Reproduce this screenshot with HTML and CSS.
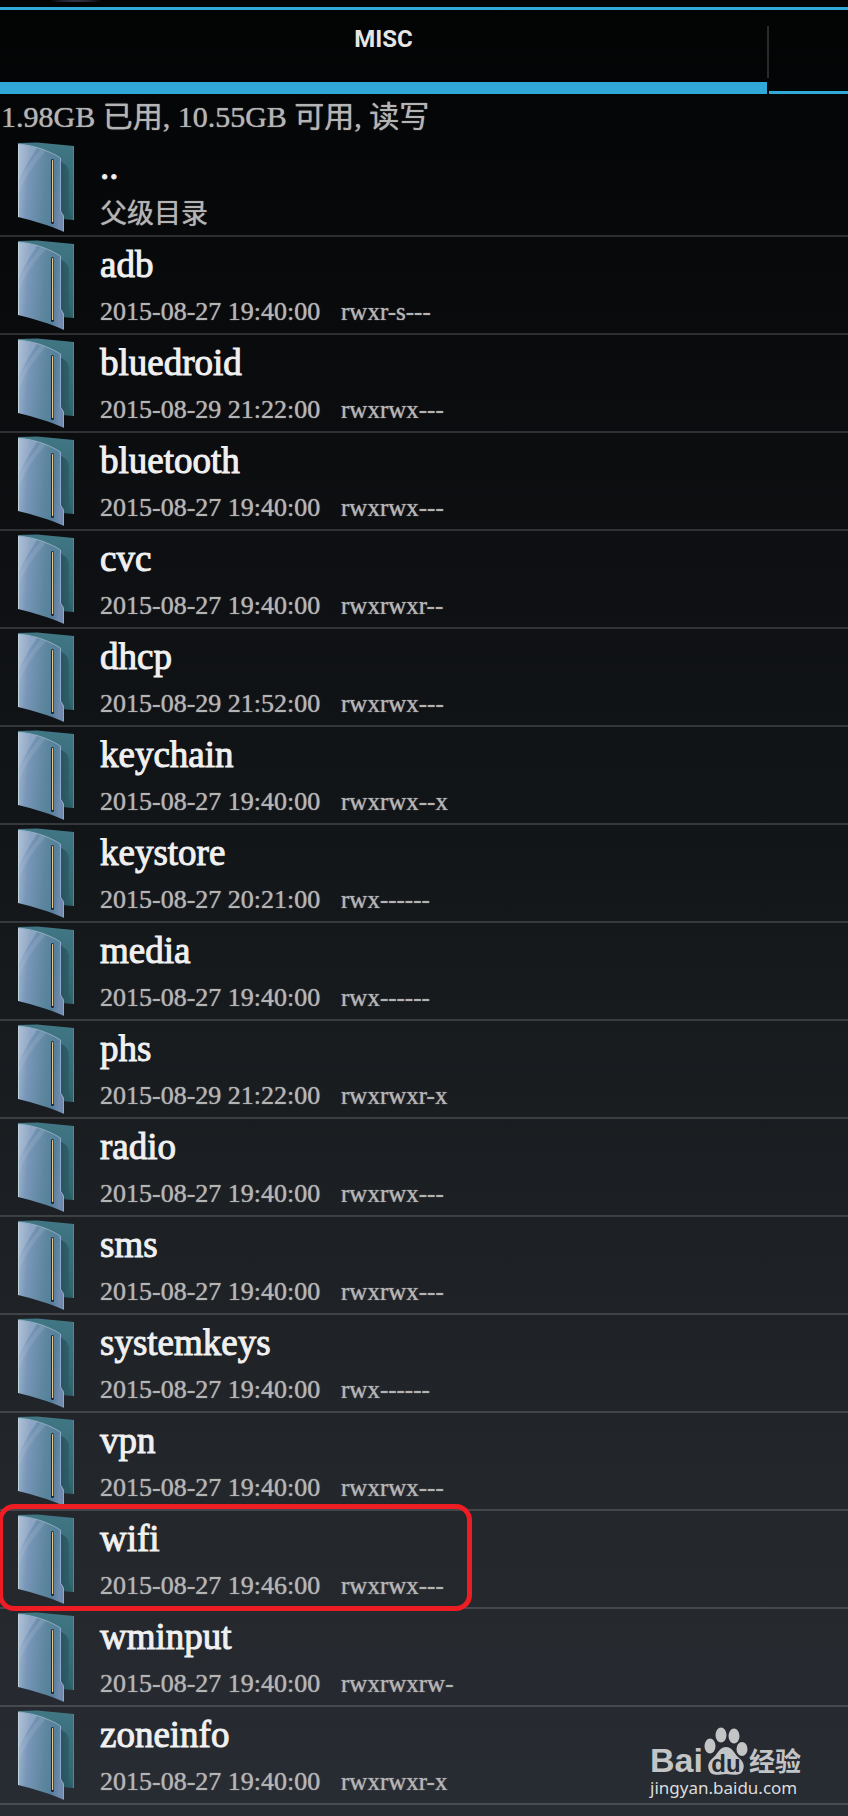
FILE: index.html
```html
<!DOCTYPE html>
<html lang="zh-CN">
<head>
<meta charset="utf-8">
<meta name="viewport" content="width=device-width, initial-scale=1">
<title>MISC</title>
<link rel="stylesheet" href="styles.css">
</head>
<body>
<svg class="defs" aria-hidden="true">
  <defs>
    <linearGradient id="back" x1="0" y1="0" x2="0" y2="1"><stop offset="0" stop-color="#417785"/><stop offset="1" stop-color="#2f646e"/></linearGradient>
    <linearGradient id="front" x1="0" y1="0" x2="1" y2="0.15"><stop offset="0" stop-color="#a9bdd2"/><stop offset="0.28" stop-color="#7896b9"/><stop offset="0.65" stop-color="#5d869e"/><stop offset="0.85" stop-color="#547f9b"/><stop offset="1" stop-color="#7089ad"/></linearGradient>
    <linearGradient id="fold" x1="0" y1="0" x2="1" y2="0"><stop offset="0" stop-color="#27525c"/><stop offset="1" stop-color="#2b5a64" stop-opacity=".6"/></linearGradient>
    <symbol id="folder" viewBox="0 0 60 92">
      <path d="M1 1 L20 .5 L57 4 L57 78 L45 77 L40 60Z" fill="url(#back)"/>
      <path d="M42 18 L50 24 L52 29 L52 68 L55 77 L46 77 L42 70Z" fill="url(#fold)"/>
      <path d="M56.500 4 V78" stroke="#4f8a98"/>
      <path d="M1 2 C14 3 29 7 43.500 16 L43.500 69 L47 74 L47 90 C32 83 17 79 1 75Z" fill="url(#front)"/>
      <path d="M1.500 2.500 L20 5.500 C14 16 6 26 1.500 42Z" fill="#c5cde0" opacity=".3"/>
      <path d="M24 7 L29 9 C20 19 9 32 2 50 L2 42 C8 27 16 17 24 7Z" fill="#c5cde0" opacity=".16"/>
      <path d="M1.500 2 V75" stroke="#bfd3df"/>
      <path d="M43.500 16 L43.500 69 L46.500 74 V89" fill="none" stroke="#8fa9cb"/>
      <path d="M1 2 C14 3 29 7 43.500 16" fill="none" stroke="#9db8cb" stroke-width=".8"/>
      <rect x="34" y="17" width="3" height="65" rx="1.500" fill="#20282c"/>
      <rect x="35" y="18" width="1.200" height="62" rx=".6" fill="#f1c98a"/>
    </symbol>
  </defs>
</svg>
<div class="screen">
  <div class="topstrip"><span class="glow"></span></div>
  <nav class="tabs" role="tablist">
    <button class="tab tab-active" role="tab" aria-selected="true">MISC</button>
    <span class="tab-divider"></span>
    <button class="tab tab-next" role="tab" aria-selected="false" aria-label="下一个"></button>
  </nav>
  <p class="status">1.98GB 已用, 10.55GB 可用, 读写</p>
  <ul class="files">
    <li><button class="row"><svg class="icon"><use href="#folder"/></svg><span class="info"><span class="name">..</span><span class="meta"><span class="parent">父级目录</span></span></span></button></li>
    <li><button class="row"><svg class="icon"><use href="#folder"/></svg><span class="info"><span class="name">adb</span><span class="meta"><span class="date">2015-08-27 19:40:00</span><span class="perm">rwxr-s---</span></span></span></button></li>
    <li><button class="row"><svg class="icon"><use href="#folder"/></svg><span class="info"><span class="name">bluedroid</span><span class="meta"><span class="date">2015-08-29 21:22:00</span><span class="perm">rwxrwx---</span></span></span></button></li>
    <li><button class="row"><svg class="icon"><use href="#folder"/></svg><span class="info"><span class="name">bluetooth</span><span class="meta"><span class="date">2015-08-27 19:40:00</span><span class="perm">rwxrwx---</span></span></span></button></li>
    <li><button class="row"><svg class="icon"><use href="#folder"/></svg><span class="info"><span class="name">cvc</span><span class="meta"><span class="date">2015-08-27 19:40:00</span><span class="perm">rwxrwxr--</span></span></span></button></li>
    <li><button class="row"><svg class="icon"><use href="#folder"/></svg><span class="info"><span class="name">dhcp</span><span class="meta"><span class="date">2015-08-29 21:52:00</span><span class="perm">rwxrwx---</span></span></span></button></li>
    <li><button class="row"><svg class="icon"><use href="#folder"/></svg><span class="info"><span class="name">keychain</span><span class="meta"><span class="date">2015-08-27 19:40:00</span><span class="perm">rwxrwx--x</span></span></span></button></li>
    <li><button class="row"><svg class="icon"><use href="#folder"/></svg><span class="info"><span class="name">keystore</span><span class="meta"><span class="date">2015-08-27 20:21:00</span><span class="perm">rwx------</span></span></span></button></li>
    <li><button class="row"><svg class="icon"><use href="#folder"/></svg><span class="info"><span class="name">media</span><span class="meta"><span class="date">2015-08-27 19:40:00</span><span class="perm">rwx------</span></span></span></button></li>
    <li><button class="row"><svg class="icon"><use href="#folder"/></svg><span class="info"><span class="name">phs</span><span class="meta"><span class="date">2015-08-29 21:22:00</span><span class="perm">rwxrwxr-x</span></span></span></button></li>
    <li><button class="row"><svg class="icon"><use href="#folder"/></svg><span class="info"><span class="name">radio</span><span class="meta"><span class="date">2015-08-27 19:40:00</span><span class="perm">rwxrwx---</span></span></span></button></li>
    <li><button class="row"><svg class="icon"><use href="#folder"/></svg><span class="info"><span class="name">sms</span><span class="meta"><span class="date">2015-08-27 19:40:00</span><span class="perm">rwxrwx---</span></span></span></button></li>
    <li><button class="row"><svg class="icon"><use href="#folder"/></svg><span class="info"><span class="name">systemkeys</span><span class="meta"><span class="date">2015-08-27 19:40:00</span><span class="perm">rwx------</span></span></span></button></li>
    <li><button class="row"><svg class="icon"><use href="#folder"/></svg><span class="info"><span class="name">vpn</span><span class="meta"><span class="date">2015-08-27 19:40:00</span><span class="perm">rwxrwx---</span></span></span></button></li>
    <li class="marked"><button class="row"><svg class="icon"><use href="#folder"/></svg><span class="info"><span class="name">wifi</span><span class="meta"><span class="date">2015-08-27 19:46:00</span><span class="perm">rwxrwx---</span></span></span></button></li>
    <li><button class="row"><svg class="icon"><use href="#folder"/></svg><span class="info"><span class="name">wminput</span><span class="meta"><span class="date">2015-08-27 19:40:00</span><span class="perm">rwxrwxrw-</span></span></span></button></li>
    <li><button class="row"><svg class="icon"><use href="#folder"/></svg><span class="info"><span class="name">zoneinfo</span><span class="meta"><span class="date">2015-08-27 19:40:00</span><span class="perm">rwxrwxr-x</span></span></span></button></li>
  </ul>
  <div class="watermark">
    <div class="brand">
      <span class="bai">Bai</span>
      <span class="paw">
        <svg class="paw-shape" viewBox="0 0 46 50" aria-hidden="true">
          <g fill="#c3c4c5">
            <ellipse cx="7" cy="19" rx="5.500" ry="7.500"/>
            <ellipse cx="18" cy="8" rx="5.500" ry="7.500"/>
            <ellipse cx="31" cy="9" rx="5.500" ry="7.500"/>
            <ellipse cx="39" cy="22" rx="5.500" ry="7"/>
            <path d="M23 20 C29 20 31 26 35 30 C40 34 42 38 40 43 C38 49 32 48 23 47 C14 48 8 49 6 43 C4 38 6 34 11 30 C15 26 17 20 23 20Z"/>
          </g>
        </svg>
        <span class="du">du</span>
      </span>
      <span class="jingyan">经验</span>
    </div>
    <div class="url">jingyan.baidu.com</div>
  </div>
</div>
</body>
</html>
```
FILE: styles.css
```css
*, *::before, *::after { box-sizing: border-box; }

body {
  margin: 0;
  background: #000;
  font-family: "Liberation Serif", "Noto Sans CJK SC", serif;
  color: #b4b4b4;
}

button {
  appearance: none;
  margin: 0;
  padding: 0;
  border: 0;
  background: none;
  color: inherit;
  font: inherit;
}

.defs { position: absolute; width: 0; height: 0; }

.screen {
  position: relative;
  min-height: 100vh;
  background: linear-gradient(#020303, #08090b 14%, #121518 45%, #23272b 82%, #282c33);
  overflow: hidden;
}

.topstrip {
  height: 10px;
  padding-left: 46px;
  border-bottom: 3px solid #30a8d8;
}

.glow {
  display: block;
  width: 60px;
  height: 2px;
  background: radial-gradient(closest-side, #5c5f88, transparent);
}

.tabs { display: flex; height: 84px; }

.tab-active {
  flex: 1;
  padding-bottom: 14px;
  border-bottom: 12px solid #30a8d8;
  color: #e6e6e6;
  font: bold 24px/28px Roboto, sans-serif;
}

.tab-divider {
  width: 2px;
  height: 52px;
  margin-top: 16px;
  background: #292a2b;
}

.tab-next { width: 79px; border-bottom: 3px solid #30a8d8; }

.status {
  margin: 0;
  padding-left: 1px;
  font-size: 30px;
  line-height: 45px;
  white-space: nowrap;
  text-shadow: 0 0 1px #b4b4b4;
}

.files { margin: 0; padding: 0; list-style: none; }

.files li {
  position: relative;
  border-bottom: 2px solid rgba(255, 255, 255, 0.15);
}

.row {
  display: flex;
  width: 100%;
  height: 96px;
  padding: 3px 0 0 17px;
  text-align: left;
}

.icon { width: 60px; height: 92px; flex: none; }

.info {
  display: flex;
  flex-direction: column;
  gap: 3px;
  margin-left: 23px;
  padding-top: 1px;
}

.name {
  color: #f0f0f0;
  font-size: 37px;
  line-height: 48px;
  -webkit-text-stroke: 1px #f0f0f0;
}

.meta {
  display: flex;
  align-items: baseline;
  line-height: 40px;
  text-shadow: 0 0 1px #b4b4b4;
}

.date { width: 241px; font-size: 26px; }

.perm { font-size: 25px; }

.parent { font-size: 27px; }

.marked::after {
  content: "";
  position: absolute;
  z-index: 1;
  top: -7px;
  left: -2px;
  width: 474px;
  height: 107px;
  border: 5px solid #ee1c23;
  border-radius: 16px;
  pointer-events: none;
}

.watermark {
  position: absolute;
  right: 46px;
  bottom: 17px;
  width: 152px;
  color: #c3c4c5;
}

.brand { display: flex; align-items: flex-end; height: 50px; }

.bai { font: bold 34px/34px "Liberation Sans", sans-serif; }

.paw { position: relative; width: 46px; height: 50px; flex: none; }

.paw-shape { display: block; width: 46px; height: 50px; }

.du {
  position: absolute;
  inset: 25px 0 0;
  color: #262a2f;
  font: bold 24px/24px "Liberation Sans", sans-serif;
  text-align: center;
}

.jingyan { font: bold 26px/34px "Noto Sans CJK SC", sans-serif; }

.url { color: #dcdddd; font: 17px/22px "Noto Sans", sans-serif; }
```
